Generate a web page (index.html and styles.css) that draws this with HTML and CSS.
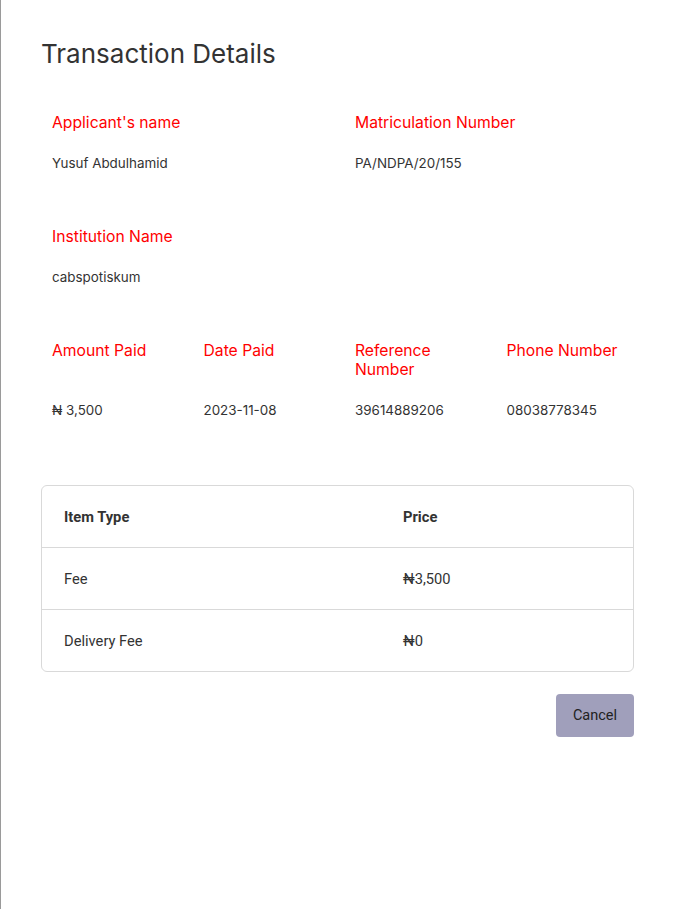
FILE: index.html
```html
<!DOCTYPE html>
<html>
<head>
<meta charset="utf-8">
<link rel="stylesheet" href="styles.css">
</head>
<body>
<div class="modal">
  <h1 class="title">Transaction Details</h1>
  <div class="grid two">
    <div class="field">
      <div class="label">Applicant's name</div>
      <div class="value">Yusuf Abdulhamid</div>
    </div>
    <div class="field">
      <div class="label">Matriculation Number</div>
      <div class="value">PA/NDPA/20/155</div>
    </div>
  </div>
  <div class="grid two">
    <div class="field">
      <div class="label">Institution Name</div>
      <div class="value">cabspotiskum</div>
    </div>
  </div>
  <div class="grid four">
    <div class="field">
      <div class="label">Amount Paid</div>
      <div class="value">₦ 3,500</div>
    </div>
    <div class="field">
      <div class="label">Date Paid</div>
      <div class="value">2023-11-08</div>
    </div>
    <div class="field">
      <div class="label">Reference Number</div>
      <div class="value">39614889206</div>
    </div>
    <div class="field">
      <div class="label">Phone Number</div>
      <div class="value">08038778345</div>
    </div>
  </div>
  <div class="table-wrap">
    <table class="items">
      <thead>
        <tr><th class="col-type">Item Type</th><th>Price</th></tr>
      </thead>
      <tbody>
        <tr><td>Fee</td><td>₦3,500</td></tr>
        <tr><td>Delivery Fee</td><td>₦0</td></tr>
      </tbody>
    </table>
  </div>
  <div class="actions">
    <button class="btn-cancel">Cancel</button>
  </div>
</div>
</body>
</html>
```

FILE: styles.css
```css
html, body {
  margin: 0;
  padding: 0;
  background: #fff;
}
body {
  border-left: 1px solid #9a9a9a;
  min-height: 909px;
  box-sizing: border-box;
  font-family: Inter, "Noto Sans", sans-serif;
  color: #333;
}
.modal {
  padding: 38px 39px 0 40px;
}
.title {
  margin: 0 0 44px 0;
  font-size: 26px;
  line-height: 31px;
  font-weight: 400;
  color: #333;
}
.grid {
  display: grid;
}
.grid.two {
  grid-template-columns: 303px 303px;
}
.grid.four {
  grid-template-columns: repeat(4, 151.5px);
}
.field {
  padding: 0 11px;
  margin-bottom: 55px;
  display: flex;
  flex-direction: column;
}
.label {
  color: #ff0000;
  font-size: 15.7px;
  line-height: 19px;
  margin-bottom: 23px;
}
.value {
  margin-top: auto;
  font-size: 13.4px;
  line-height: 17px;
  color: #333;
}
.table-wrap {
  margin-top: 11px;
  border: 1px solid #d9d9d9;
  border-radius: 6px;
  overflow: hidden;
}
.items {
  width: 100%;
  border-collapse: collapse;
  font-family: Roboto, "Liberation Sans", sans-serif;
  font-size: 14.7px;
  color: #333;
}
.items th, .items td {
  text-align: left;
  padding: 0 22px;
  height: 61px;
}
.items th {
  font-weight: 700;
}
.items .col-type {
  width: 295px;
}
.items tbody tr td {
  border-top: 1px solid #d9d9d9;
}
.actions {
  display: flex;
  justify-content: flex-end;
  margin-top: 22px;
}
.btn-cancel {
  width: 78px;
  height: 43px;
  background: #a09fbb;
  border: none;
  border-radius: 4px;
  font-family: Roboto, "Liberation Sans", sans-serif;
  font-size: 14.5px;
  color: #222;
}
```
